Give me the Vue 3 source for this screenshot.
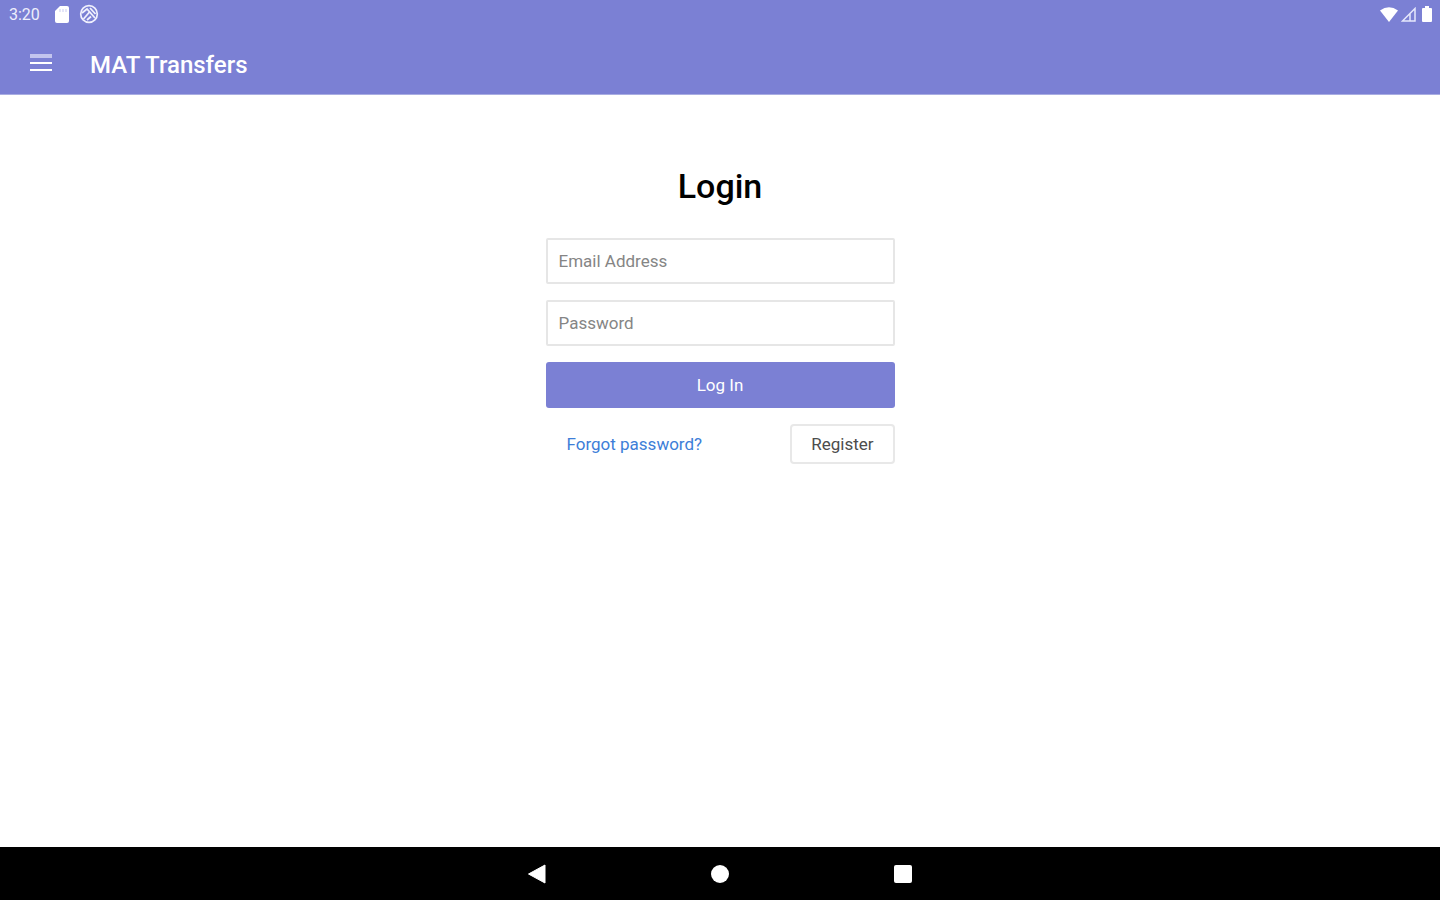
<script setup>
import { ref } from 'vue'

const email = ref('')
const password = ref('')
</script>

<template>
  <div class="screen">
    <header class="header">
      <div class="status">
        <div class="status-group">
          <span class="clock">3:20</span>
          <svg class="sd" width="14" height="17" viewBox="0 0 14 17" aria-hidden="true">
            <path d="M5 0h7a2 2 0 0 1 2 2v13a2 2 0 0 1-2 2H2a2 2 0 0 1-2-2V5z" fill="#fff" />
            <path d="M5 3v3M8 3v3M11 3v3" stroke="#c9cbf1" stroke-width="1" />
          </svg>
          <svg width="20" height="20" viewBox="0 0 20 20" fill="none" stroke="#f0f0fd" aria-hidden="true">
            <circle cx="10" cy="10" r="8.3" stroke-width="1.7" />
            <path d="M3 9l5-4 8 9M4.5 15l6-7M11 4l5.5 6M8 16l4-3.5" stroke-width="1.8" />
          </svg>
        </div>
        <div class="status-group signals">
          <svg width="18" height="15" viewBox="0 0 18 15" aria-hidden="true">
            <path d="M0 3.5Q9-3 18 3.5L9 15z" fill="#fff" />
          </svg>
          <svg width="15" height="15" viewBox="0 0 15 15" aria-hidden="true">
            <path d="M1.5 14L14 1.5V14zM9 7v7" fill="none" stroke="#e6e7fb" stroke-width="1.5" />
          </svg>
          <svg class="battery" width="10" height="16" viewBox="0 0 10 16" aria-hidden="true">
            <path d="M3 0h4v2h2a1 1 0 0 1 1 1v12a1 1 0 0 1-1 1H1a1 1 0 0 1-1-1V3a1 1 0 0 1 1-1h2z" fill="#fff" />
          </svg>
        </div>
      </div>
      <div class="toolbar">
        <button class="menu" type="button" aria-label="Menu">
          <svg width="22" height="18" viewBox="0 0 22 18" aria-hidden="true">
            <path d="M0 0h22v4H0z" fill="#c3c5ee" />
            <path d="M0 8h22v2H0zM0 15h22v2H0z" fill="#fff" />
          </svg>
        </button>
        <span class="title">MAT Transfers</span>
      </div>
    </header>

    <main class="content">
      <form class="login" @submit.prevent>
        <h1>Login</h1>
        <input v-model="email" class="field" type="email" placeholder="Email Address" aria-label="Email Address" />
        <input v-model="password" class="field" type="password" placeholder="Password" aria-label="Password" />
        <button class="submit" type="submit">Log In</button>
        <div class="actions">
          <a class="forgot" href="#">Forgot password?</a>
          <button class="register" type="button">Register</button>
        </div>
      </form>
    </main>

    <nav class="navbar">
      <button type="button" aria-label="Back">
        <svg width="20" height="20" viewBox="0 0 20 20"><path d="M1.5 10L18 1v18z" fill="#fff" stroke="#fff" stroke-linejoin="round" /></svg>
      </button>
      <button type="button" aria-label="Home">
        <svg width="20" height="20" viewBox="0 0 20 20"><circle cx="10" cy="10" r="9" fill="#fff" /></svg>
      </button>
      <button type="button" aria-label="Recent apps">
        <svg width="20" height="20" viewBox="0 0 20 20"><rect x="1" y="1" width="18" height="18" rx="2" fill="#fff" /></svg>
      </button>
    </nav>
  </div>
</template>

<style>
body {
  margin: 0;
}
</style>

<style scoped>
.screen {
  min-height: 100vh;
  display: flex;
  flex-direction: column;
  background: #fff;
  font-family: Roboto, "Liberation Sans", sans-serif;
}
button,
input {
  font-family: inherit;
  box-sizing: border-box;
}
button {
  cursor: pointer;
}
svg {
  display: block;
}
.header {
  background: #7b80d4;
  color: #fff;
  border-bottom: 1px solid #a9ade2;
}
.status {
  display: flex;
  justify-content: space-between;
  height: 28px;
  padding: 0 8px 0 9px;
}
.status-group {
  display: flex;
  align-items: center;
}
.clock {
  font-size: 16px;
  line-height: 28px;
  padding-top: 2px;
  color: #eeeefc;
}
.sd {
  margin: 0 10px 0 15px;
}
.signals {
  gap: 3px;
}
.battery {
  margin-left: 3px;
}
.toolbar {
  display: flex;
  align-items: center;
  height: 66px;
  padding: 0 24px;
}
.menu {
  padding: 6px;
  margin-top: 4px;
  border: 0;
  background: none;
}
.title {
  margin: 8px 0 0 32px;
  font-size: 24px;
  font-weight: 500;
  line-height: 28px;
}
.content {
  flex: 1;
  padding: 71px 24px;
}
.login {
  display: flex;
  flex-direction: column;
  gap: 16px;
  max-width: 349px;
  margin: 0 auto;
}
h1 {
  margin: 0 0 16px;
  color: #000;
  font-size: 34px;
  font-weight: 500;
  line-height: 40px;
  text-align: center;
}
.field {
  width: 100%;
  height: 46px;
  padding: 0 11px;
  border: 2px solid #e6e6e6;
  border-radius: 2px;
  outline: 0;
  background: #fff;
  color: #333;
  font-size: 17px;
}
.field::placeholder {
  color: #858585;
  opacity: 1;
}
.submit {
  height: 46px;
  border: 0;
  border-radius: 3px;
  background: #7b80d4;
  color: #fff;
  font-size: 17px;
}
.actions {
  display: flex;
  align-items: center;
  justify-content: space-between;
  padding-left: 21px;
}
.forgot {
  color: #3d7ed8;
  font-size: 17px;
  line-height: 24px;
  text-decoration: none;
}
.register {
  height: 40px;
  padding: 0 19px;
  border: 2px solid #e8e8e8;
  border-radius: 4px;
  background: #fff;
  color: #4c4c4c;
  font-size: 17px;
}
.navbar {
  display: flex;
  align-items: center;
  justify-content: center;
  gap: 151px;
  height: 53px;
  background: #000;
}
.navbar button {
  padding: 6px;
  border: 0;
  background: none;
}
</style>
